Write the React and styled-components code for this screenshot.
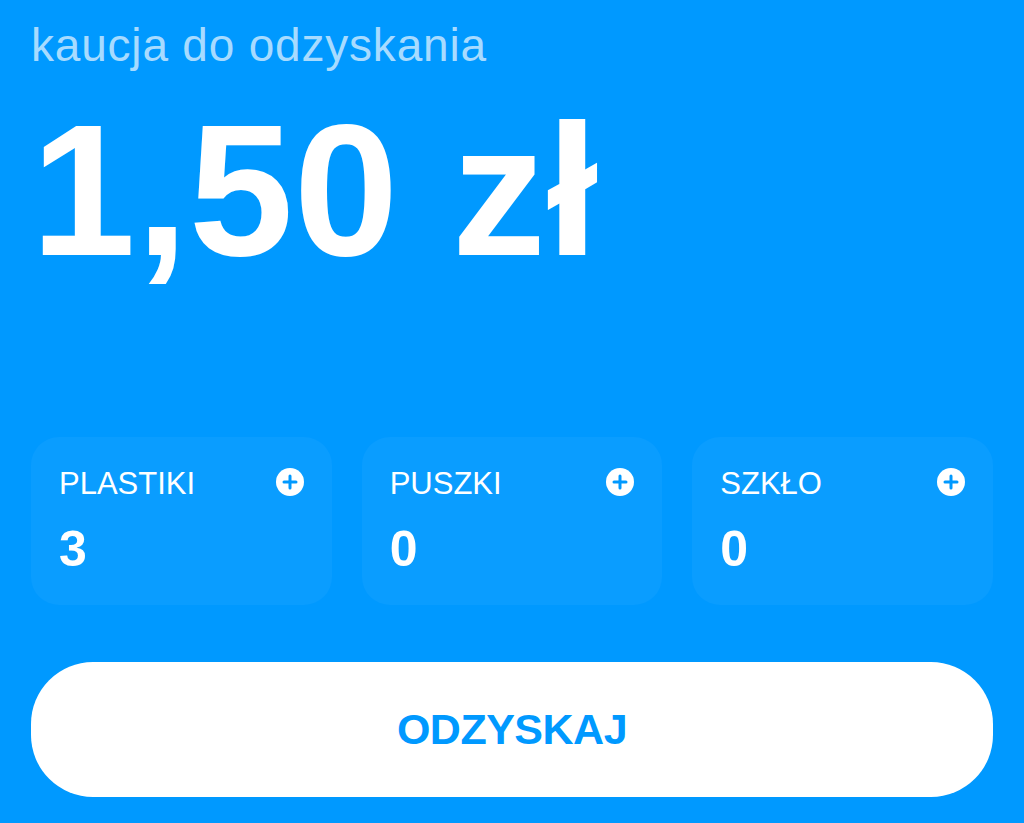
import React from "react";
import styled, { createGlobalStyle } from "styled-components";

const Global = createGlobalStyle`
  html, body {
    margin: 0;
    background: #0099ff;
    font-family: "Liberation Sans", Arial, sans-serif;
  }
`;

const Screen = styled.div`
  width: 1024px;
  height: 823px;
  box-sizing: border-box;
  padding: 22px 31px 0 31px;
  display: flex;
  flex-direction: column;
  overflow: hidden;
`;

const Caption = styled.div`
  font-size: 46px;
  line-height: 1;
  color: #a7dbff;
  letter-spacing: 0.8px;
`;

const Amount = styled.div`
  margin-top: 28px;
  font-size: 188px;
  line-height: 1;
  font-weight: 700;
  color: #fff;
  letter-spacing: 0.5px;
`;

const Cards = styled.div`
  margin-top: 153px;
  display: grid;
  grid-template-columns: repeat(3, 1fr);
  gap: 30px;
`;

const Card = styled.div`
  height: 168px;
  box-sizing: border-box;
  padding: 31px 28px 0 28px;
  border-radius: 28px;
  background: rgba(255, 255, 255, 0.04);
  display: flex;
  flex-direction: column;
`;

const CardHead = styled.div`
  display: flex;
  align-items: center;
  justify-content: space-between;
`;

const Label = styled.span`
  font-size: 31px;
  line-height: 1;
  color: #fff;
`;

const Count = styled.div`
  margin-top: 25px;
  font-size: 50px;
  line-height: 1;
  font-weight: 700;
  color: #fff;
`;

const PlusButton = styled.span`
  width: 28px;
  height: 28px;
  display: flex;
  align-items: center;
  justify-content: center;
  margin-top: -3px;
`;

const Action = styled.button`
  margin-top: 57px;
  height: 135px;
  border: none;
  border-radius: 62px;
  background: #fff;
  color: #0099ff;
  font-family: "Liberation Sans", Arial, sans-serif;
  font-size: 43px;
  font-weight: 700;
  letter-spacing: -0.5px;
  cursor: pointer;
`;

const Plus = () => (
  <PlusButton>
    <svg width="28" height="28" viewBox="0 0 28 28">
      <circle cx="14" cy="14" r="14" fill="#fff" />
      <path
        d="M14 8v12M8 14h12"
        stroke="#0099ff"
        strokeWidth="3"
        strokeLinecap="round"
      />
    </svg>
  </PlusButton>
);

const items = [
  { name: "PLASTIKI", count: 3 },
  { name: "PUSZKI", count: 0 },
  { name: "SZKŁO", count: 0 },
];

export default function App() {
  return (
    <Screen>
      <Global />
      <Caption>kaucja do odzyskania</Caption>
      <Amount>1,50 zł</Amount>
      <Cards>
        {items.map((it) => (
          <Card key={it.name}>
            <CardHead>
              <Label>{it.name}</Label>
              <Plus />
            </CardHead>
            <Count>{it.count}</Count>
          </Card>
        ))}
      </Cards>
      <Action>ODZYSKAJ</Action>
    </Screen>
  );
}
